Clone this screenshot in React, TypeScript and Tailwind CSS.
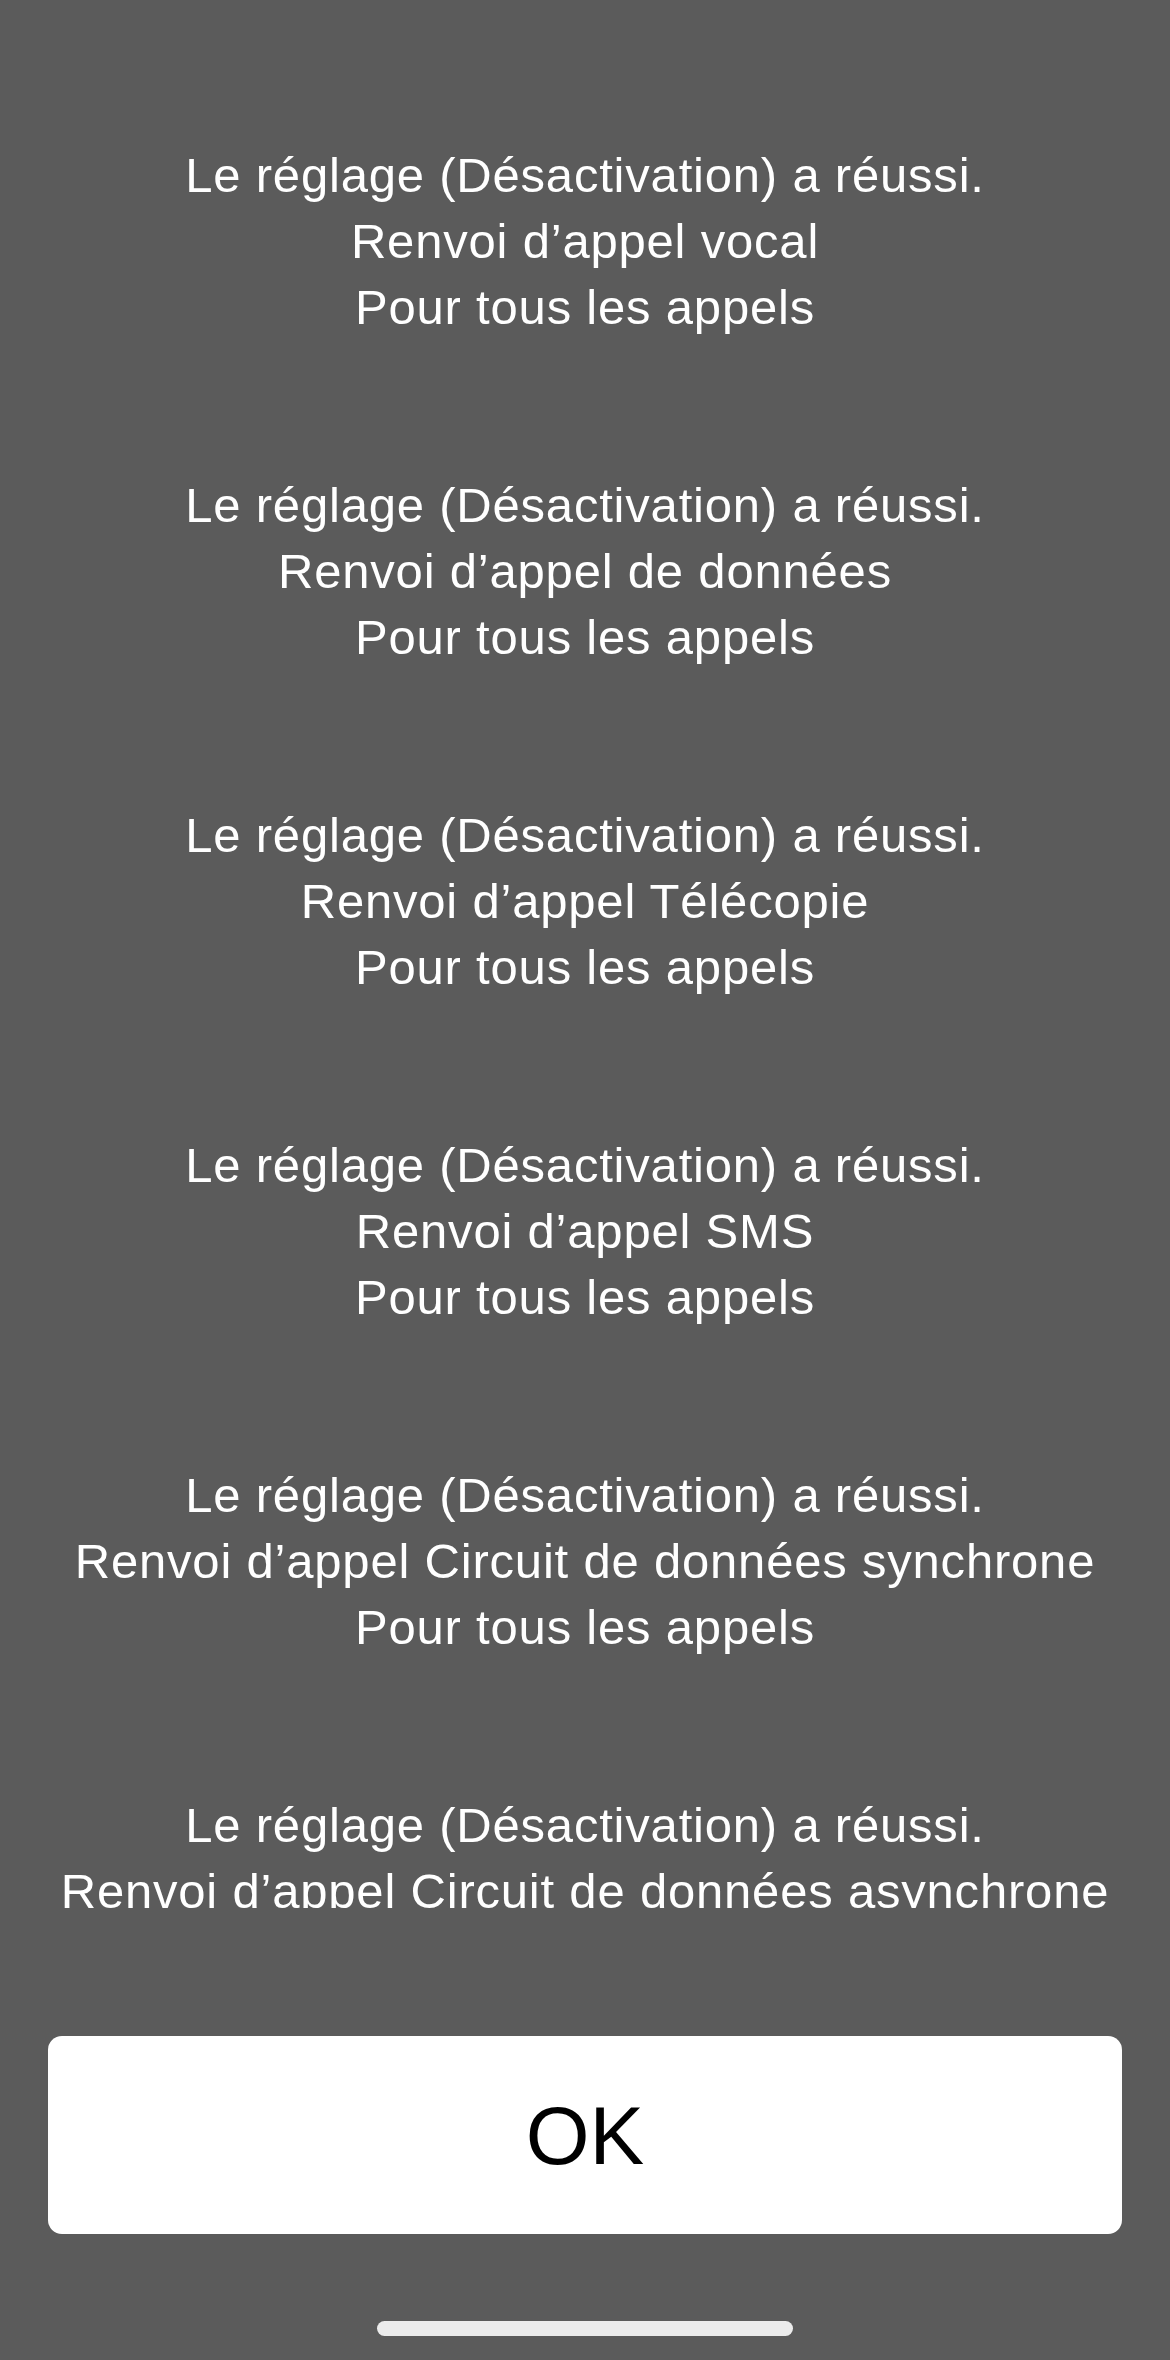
import React from 'react';

const results = [
  'Renvoi d’appel vocal',
  'Renvoi d’appel de données',
  'Renvoi d’appel Télécopie',
  'Renvoi d’appel SMS',
  'Renvoi d’appel Circuit de données synchrone',
  'Renvoi d’appel Circuit de données asynchrone',
];

const ResultBlock: React.FC<{ service: string }> = ({ service }) => (
  <div className="flex flex-col items-center text-center text-white text-[49px] leading-[66px] tracking-[0.8px]">
    <p className="whitespace-nowrap">Le réglage (Désactivation) a réussi.</p>
    <p className="whitespace-nowrap">{service}</p>
    <p className="whitespace-nowrap">Pour tous les appels</p>
  </div>
);

export default function App() {
  return (
    <div
      className="w-[1170px] h-[2360px] bg-[#5b5b5b] flex flex-col overflow-hidden"
      style={{ fontFamily: '"Liberation Sans", Arial, sans-serif' }}
    >
      <div className="h-[1908px] overflow-hidden pt-[142px] flex flex-col gap-[132px]">
        {results.map((s) => (
          <ResultBlock key={s} service={s} />
        ))}
      </div>
      <div className="mt-[128px] px-[48px]">
        <button className="w-full h-[198px] bg-white rounded-[14px] flex items-center justify-center text-black text-[82px]">
          OK
        </button>
      </div>
      <div className="mt-[87px] flex justify-center">
        <div className="w-[416px] h-[15px] rounded-full bg-[#ececec]" />
      </div>
    </div>
  );
}
